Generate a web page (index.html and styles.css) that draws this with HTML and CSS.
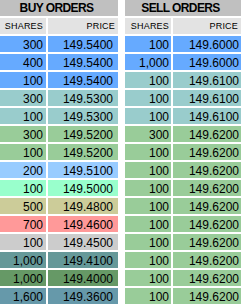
FILE: index.html
```html
<!DOCTYPE html>
<html>
<head>
<meta charset="utf-8">
<link rel="stylesheet" href="styles.css">
</head>
<body>
<div class="book">
  <section class="side buy">
    <div class="title">BUY ORDERS</div>
    <div class="grid">
      <div class="colh">SHARES</div><div class="colh">PRICE</div>
      <div class="c c-blue">300</div><div class="c p c-blue">149.5400</div>
      <div class="c c-blue">400</div><div class="c p c-blue">149.5400</div>
      <div class="c c-blue">100</div><div class="c p c-blue">149.5400</div>
      <div class="c c-teal">300</div><div class="c p c-teal">149.5300</div>
      <div class="c c-teal">100</div><div class="c p c-teal">149.5300</div>
      <div class="c c-green">300</div><div class="c p c-green">149.5200</div>
      <div class="c c-green">100</div><div class="c p c-green">149.5200</div>
      <div class="c c-sky">200</div><div class="c p c-sky">149.5100</div>
      <div class="c c-mint">100</div><div class="c p c-mint">149.5000</div>
      <div class="c c-khaki">500</div><div class="c p c-khaki">149.4800</div>
      <div class="c c-pink">700</div><div class="c p c-pink">149.4600</div>
      <div class="c c-grey">100</div><div class="c p c-grey">149.4500</div>
      <div class="c c-dteal">1,000</div><div class="c p c-dteal">149.4100</div>
      <div class="c c-dgreen">1,000</div><div class="c p c-dgreen">149.4000</div>
      <div class="c c-steel">1,600</div><div class="c p c-steel">149.3600</div>
    </div>
  </section>
  <section class="side sell">
    <div class="title">SELL ORDERS</div>
    <div class="grid">
      <div class="colh">SHARES</div><div class="colh">PRICE</div>
      <div class="c c-blue">100</div><div class="c p c-blue">149.6000</div>
      <div class="c c-blue">1,000</div><div class="c p c-blue">149.6000</div>
      <div class="c c-teal">100</div><div class="c p c-teal">149.6100</div>
      <div class="c c-teal">100</div><div class="c p c-teal">149.6100</div>
      <div class="c c-teal">100</div><div class="c p c-teal">149.6100</div>
      <div class="c c-green">300</div><div class="c p c-green">149.6200</div>
      <div class="c c-green">100</div><div class="c p c-green">149.6200</div>
      <div class="c c-green">100</div><div class="c p c-green">149.6200</div>
      <div class="c c-green">100</div><div class="c p c-green">149.6200</div>
      <div class="c c-green">100</div><div class="c p c-green">149.6200</div>
      <div class="c c-green">100</div><div class="c p c-green">149.6200</div>
      <div class="c c-green">100</div><div class="c p c-green">149.6200</div>
      <div class="c c-green">100</div><div class="c p c-green">149.6200</div>
      <div class="c c-green">100</div><div class="c p c-green">149.6200</div>
      <div class="c c-green">100</div><div class="c p c-green">149.6200</div>
    </div>
  </section>
</div>
</body>
</html>
```
FILE: styles.css
```css
html, body {
  margin: 0;
  padding: 0;
  background: #ffffff;
}
body {
  font-family: "Liberation Sans", Arial, sans-serif;
  color: #000000;
  overflow: hidden;
}
.book {
  display: flex;
  gap: 7px;
  align-items: flex-start;
}
.side {
  display: flex;
  flex-direction: column;
  gap: 2px;
}
.buy { width: 118px; }
.sell { width: 116px; }
.title {
  height: 16px;
  line-height: 16px;
  background: #c0c0c0;
  font-weight: bold;
  font-size: 12px;
  letter-spacing: -0.6px;
  text-align: center;
  padding-right: 5px;
}
.grid {
  display: grid;
  gap: 2px;
  grid-auto-rows: 16px;
}
.buy .grid { grid-template-columns: 46px 70px; }
.sell .grid { grid-template-columns: 46px 68px; }
.colh {
  background: #e3e3e3;
  font-size: 9px;
  line-height: 16px;
  text-align: right;
  padding-right: 3px;
  letter-spacing: 0.2px;
}
.c {
  font-size: 12px;
  line-height: 16px;
  padding-top: 1px;
  box-sizing: border-box;
  text-align: right;
  padding-right: 3px;
  white-space: nowrap;
}
.buy .p { padding-right: 5px; }
.sell .p { padding-right: 2px; }
.sell .c:not(.p), .sell .colh:first-child { padding-right: 2px; }
.c-blue { background: #66aaff; }
.c-teal { background: #99cccc; }
.c-green { background: #99cc99; }
.c-sky { background: #99ccff; }
.c-mint { background: #99ffcc; }
.c-khaki { background: #cccc99; }
.c-pink { background: #ff9999; }
.c-grey { background: #cccccc; }
.c-dteal { background: #669999; }
.c-dgreen { background: #669966; }
.c-steel { background: #6699aa; }
```
